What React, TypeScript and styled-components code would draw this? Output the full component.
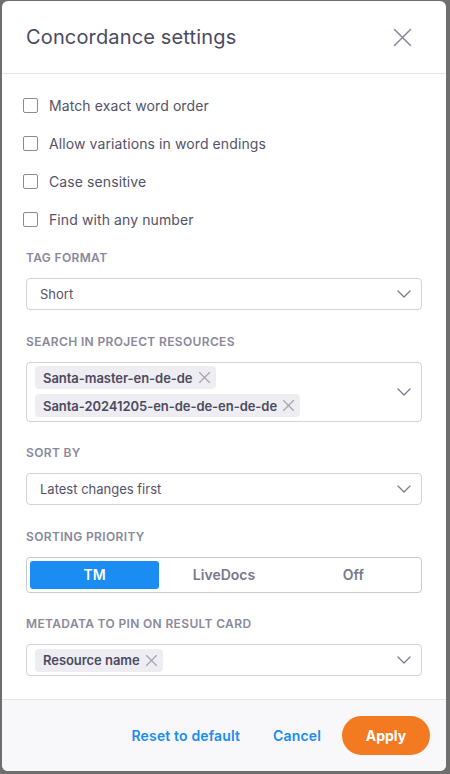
import React from "react";
import styled, { createGlobalStyle } from "styled-components";

const Global = createGlobalStyle`
  html, body { margin: 0; padding: 0; background: #6e6e6e; }
  body { font-family: Inter, "Noto Sans", sans-serif; -webkit-font-smoothing: antialiased; }
  * { box-sizing: border-box; }
`;

const Page = styled.div`
  width: 450px;
  height: 774px;
  padding: 1px 4px 3px 2px;
  display: flex;
`;

const Modal = styled.div`
  flex: 1;
  background: #fff;
  border-radius: 6px;
  display: flex;
  flex-direction: column;
  overflow: hidden;
`;

const Header = styled.div`
  height: 73px;
  flex-shrink: 0;
  border-bottom: 1px solid #e3e3e9;
  display: flex;
  align-items: center;
  justify-content: space-between;
  padding: 0 34px 0 24px;
`;

const Title = styled.h1`
  margin: 0;
  font-size: 20px;
  font-weight: 400;
  color: #4b4a5f;
  letter-spacing: 0.15px;
`;

const CloseButton = styled.button`
  border: 0;
  background: none;
  padding: 0;
  width: 19px;
  height: 19px;
  display: flex;
  cursor: pointer;
`;

const Body = styled.div`
  flex: 1;
  padding: 12px 24px 0 24px;
  display: flex;
  flex-direction: column;
`;

const CheckRow = styled.label`
  height: 38px;
  display: flex;
  align-items: center;
  gap: 11px;
  margin-left: -3px;
  font-size: 14px;
  color: #545268;
  letter-spacing: 0.1px;
`;

const Box = styled.span`
  width: 15px;
  height: 15px;
  border: 1.5px solid #8b899e;
  border-radius: 2px;
  background: #fff;
  flex-shrink: 0;
`;

const Section = styled.div<{ $first?: boolean }>`
  margin-top: ${(p) => (p.$first ? "12px" : "23.5px")};
  display: flex;
  flex-direction: column;
`;

const Label = styled.div`
  font-size: 12px;
  line-height: 16px;
  font-weight: 600;
  letter-spacing: 0.35px;
  color: #8a889b;
  text-transform: uppercase;
  margin-bottom: 12px;
`;

const SelectBox = styled.div<{ $h: number }>`
  min-height: ${(p) => p.$h}px;
  border: 1px solid #d3d2dc;
  border-radius: 4px;
  display: flex;
  align-items: center;
  padding: 0 10px 0 13px;
  font-size: 13px;
  color: #545268;
  background: #fff;
`;

const SelectText = styled.span`
  flex: 1;
`;

const Chips = styled.div`
  flex: 1;
  display: flex;
  flex-direction: column;
  align-items: flex-start;
  gap: 5px;
  padding: 3px 0 3px 0;
  margin-left: -5px;
`;

const Chip = styled.span`
  height: 23px;
  display: inline-flex;
  align-items: center;
  gap: 6px;
  padding: 0 6px 0 8px;
  background: #eeeef2;
  border-radius: 4px;
  font-size: 13px;
  font-weight: 600;
  color: #4b4a5f;
  letter-spacing: -0.05px;
`;

const Segmented = styled.div`
  height: 36px;
  border: 1px solid #c9c8d4;
  border-radius: 4px;
  padding: 3px;
  display: grid;
  grid-template-columns: repeat(3, 1fr);
`;

const Segment = styled.div<{ $active?: boolean }>`
  border-radius: 3px;
  display: flex;
  align-items: center;
  justify-content: center;
  font-size: 14px;
  font-weight: 600;
  background: ${(p) => (p.$active ? "#1a8cf2" : "transparent")};
  color: ${(p) => (p.$active ? "#fff" : "#7a788c")};
`;

const Footer = styled.div`
  height: 72px;
  flex-shrink: 0;
  border-top: 1px solid #e3e3e9;
  background: #f8f8fa;
  display: flex;
  align-items: center;
  justify-content: flex-end;
  padding: 0 16px 0 0;
`;

const TextButton = styled.button<{ $gap: number }>`
  border: 0;
  background: none;
  padding: 0;
  margin-right: ${(p) => p.$gap}px;
  font-family: inherit;
  font-size: 14px;
  font-weight: 600;
  letter-spacing: 0.15px;
  color: #1a8cf2;
  cursor: pointer;
`;

const ApplyButton = styled.button`
  width: 88px;
  height: 39px;
  border: 0;
  border-radius: 20px;
  background: #f47a22;
  color: #fff;
  font-family: inherit;
  font-size: 14px;
  font-weight: 700;
  cursor: pointer;
`;

const Chevron = () => (
  <svg width="14" height="8" viewBox="0 0 14 8" fill="none">
    <path d="M1 1l6 6 6-6" stroke="#7d7b90" strokeWidth="1.3" strokeLinecap="round" strokeLinejoin="round" />
  </svg>
);

const SmallX = () => (
  <svg width="11" height="11" viewBox="0 0 11 11" fill="none">
    <path d="M0.5 0.5l10 10M10.5 0.5l-10 10" stroke="#a3a2b2" strokeWidth="1.2" strokeLinecap="round" />
  </svg>
);

const checks = [
  "Match exact word order",
  "Allow variations in word endings",
  "Case sensitive",
  "Find with any number",
];

export default function App() {
  return (
    <>
      <Global />
      <Page>
        <Modal>
          <Header>
            <Title>Concordance settings</Title>
            <CloseButton aria-label="Close">
              <svg width="19" height="19" viewBox="0 0 19 19" fill="none">
                <path d="M1.5 1.5l16 16M17.5 1.5l-16 16" stroke="#8b899e" strokeWidth="1.6" strokeLinecap="round" />
              </svg>
            </CloseButton>
          </Header>
          <Body>
            {checks.map((c) => (
              <CheckRow key={c}>
                <Box />
                {c}
              </CheckRow>
            ))}
            <Section $first>
              <Label>Tag format</Label>
              <SelectBox $h={32}>
                <SelectText>Short</SelectText>
                <Chevron />
              </SelectBox>
            </Section>
            <Section>
              <Label>Search in project resources</Label>
              <SelectBox $h={60}>
                <Chips>
                  <Chip>
                    Santa-master-en-de-de
                    <SmallX />
                  </Chip>
                  <Chip>
                    Santa-20241205-en-de-de-en-de-de
                    <SmallX />
                  </Chip>
                </Chips>
                <Chevron />
              </SelectBox>
            </Section>
            <Section>
              <Label>Sort by</Label>
              <SelectBox $h={32}>
                <SelectText>Latest changes first</SelectText>
                <Chevron />
              </SelectBox>
            </Section>
            <Section>
              <Label>Sorting priority</Label>
              <Segmented>
                <Segment $active>TM</Segment>
                <Segment>LiveDocs</Segment>
                <Segment>Off</Segment>
              </Segmented>
            </Section>
            <Section>
              <Label>Metadata to pin on result card</Label>
              <SelectBox $h={32}>
                <Chips>
                  <Chip>
                    Resource name
                    <SmallX />
                  </Chip>
                </Chips>
                <Chevron />
              </SelectBox>
            </Section>
          </Body>
          <Footer>
            <TextButton $gap={33}>Reset to default</TextButton>
            <TextButton $gap={21}>Cancel</TextButton>
            <ApplyButton>Apply</ApplyButton>
          </Footer>
        </Modal>
      </Page>
    </>
  );
}
